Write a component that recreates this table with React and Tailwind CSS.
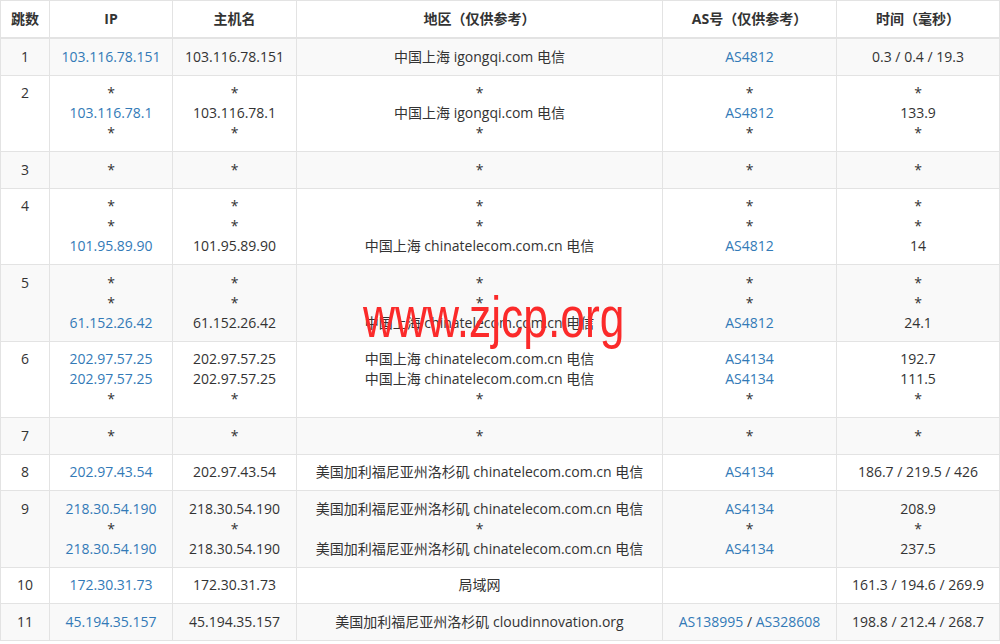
import React from "react";

const S = "*";
const B = (t) => ({ t, blue: true });

const rows = [
  { n: "1", ip: [B("103.116.78.151")], host: ["103.116.78.151"], reg: ["中国上海 igongqi.com 电信"], as: [B("AS4812")], time: ["0.3 / 0.4 / 19.3"] },
  { n: "2", ip: [S, B("103.116.78.1"), S], host: [S, "103.116.78.1", S], reg: [S, "中国上海 igongqi.com 电信", S], as: [S, B("AS4812"), S], time: [S, "133.9", S] },
  { n: "3", ip: [S], host: [S], reg: [S], as: [S], time: [S] },
  { n: "4", ip: [S, S, B("101.95.89.90")], host: [S, S, "101.95.89.90"], reg: [S, S, "中国上海 chinatelecom.com.cn 电信"], as: [S, S, B("AS4812")], time: [S, S, "14"] },
  { n: "5", ip: [S, S, B("61.152.26.42")], host: [S, S, "61.152.26.42"], reg: [S, S, "中国上海 chinatelecom.com.cn 电信"], as: [S, S, B("AS4812")], time: [S, S, "24.1"] },
  { n: "6", ip: [B("202.97.57.25"), B("202.97.57.25"), S], host: ["202.97.57.25", "202.97.57.25", S], reg: ["中国上海 chinatelecom.com.cn 电信", "中国上海 chinatelecom.com.cn 电信", S], as: [B("AS4134"), B("AS4134"), S], time: ["192.7", "111.5", S] },
  { n: "7", ip: [S], host: [S], reg: [S], as: [S], time: [S] },
  { n: "8", ip: [B("202.97.43.54")], host: ["202.97.43.54"], reg: ["美国加利福尼亚州洛杉矶 chinatelecom.com.cn 电信"], as: [B("AS4134")], time: ["186.7 / 219.5 / 426"] },
  { n: "9", ip: [B("218.30.54.190"), S, B("218.30.54.190")], host: ["218.30.54.190", S, "218.30.54.190"], reg: ["美国加利福尼亚州洛杉矶 chinatelecom.com.cn 电信", S, "美国加利福尼亚州洛杉矶 chinatelecom.com.cn 电信"], as: [B("AS4134"), S, B("AS4134")], time: ["208.9", S, "237.5"] },
  { n: "10", ip: [B("172.30.31.73")], host: ["172.30.31.73"], reg: ["局域网"], as: [], time: ["161.3 / 194.6 / 269.9"] },
  { n: "11", ip: [B("45.194.35.157")], host: ["45.194.35.157"], reg: ["美国加利福尼亚州洛杉矶 cloudinnovation.org"], as: ["__AS11__"], time: ["198.8 / 212.4 / 268.7"] },
];

function Line({ v }) {
  if (v === "__AS11__") {
    return (
      <div className="h-5 overflow-visible">
        <span className="text-[#337ab7]">AS138995</span> / <span className="text-[#337ab7]">AS328608</span>
      </div>
    );
  }
  if (typeof v === "object") return <div className="h-5 text-[#337ab7]">{v.t}</div>;
  return <div className="h-5">{v}</div>;
}

function Cell({ lines }) {
  return (
    <td className="border border-[#e3e3e3] px-2 py-[7.75px] align-top text-center">
      {lines.length === 0 ? <div className="h-5" /> : lines.map((v, i) => <Line key={i} v={v} />)}
    </td>
  );
}

export default function App() {
  const heads = ["跳数", "IP", "主机名", "地区（仅供参考）", "AS号（仅供参考）", "时间（毫秒）"];
  return (
    <div
      className="relative w-[1000px] h-[644px] bg-white overflow-hidden text-[14px] leading-[20px] text-[#333]"
      style={{ fontFamily: '"Open Sans", "Noto Sans CJK SC", sans-serif' }}
    >
      <table className="w-[999px] table-fixed border-collapse">
        <colgroup>
          <col className="w-[49px]" />
          <col className="w-[123px]" />
          <col className="w-[124px]" />
          <col className="w-[366px]" />
          <col className="w-[174px]" />
          <col className="w-[163px]" />
        </colgroup>
        <thead>
          <tr>
            {heads.map((h) => (
              <th key={h} className="border border-[#e3e3e3] border-b-2 px-1 py-2 text-center font-bold whitespace-nowrap">
                <div className="h-5">{h}</div>
              </th>
            ))}
          </tr>
        </thead>
        <tbody>
          {rows.map((r, i) => (
            <tr key={r.n} className={i % 2 === 0 ? "bg-[#f9f9f9]" : "bg-white"}>
              <Cell lines={[r.n]} />
              <Cell lines={r.ip} />
              <Cell lines={r.host} />
              <Cell lines={r.reg} />
              <Cell lines={r.as} />
              <Cell lines={r.time} />
            </tr>
          ))}
        </tbody>
      </table>
      <div
        className="absolute left-[363px] top-[288px] text-[58px] leading-[58px] text-[#fb2a2a] origin-left scale-x-[0.765] whitespace-nowrap pointer-events-none"
        style={{ fontFamily: '"Liberation Sans", Arial, sans-serif' }}
      >
        www.zjcp.org
      </div>
    </div>
  );
}
